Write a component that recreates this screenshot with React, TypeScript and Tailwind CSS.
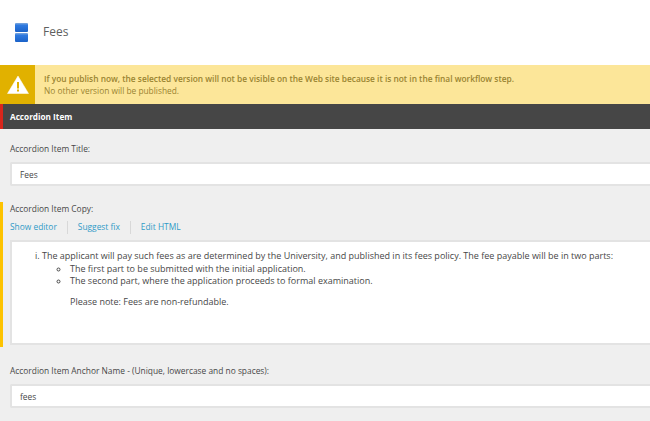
const font = "[font-family:'Open_Sans',sans-serif]";

function Field({ label, value }: { label: string; value: string }) {
  return (
    <div className="pl-[10px]">
      <label className="block h-[17px] text-[8.4px] leading-[17px] text-[#474747]">{label}</label>
      <div className="mt-[5px] h-[24px] rounded-l-[2px] border-2 border-r-0 border-[#e3e3e3] bg-white pl-[8px] text-[8.4px] leading-[21px] text-[#474747]">
        {value}
      </div>
    </div>
  );
}

export default function App() {
  return (
    <div className={`${font} h-[421px] w-[650px] overflow-hidden bg-[#efefef]`}>
      <header className="flex h-[65px] items-center bg-white pl-[15px]">
        <svg width="13" height="19" viewBox="0 0 13 19" aria-hidden="true">
          <defs>
            <linearGradient id="tile" x1="0" y1="0" x2="0" y2="1">
              <stop offset="0" stopColor="#7fa8dc" />
              <stop offset="0.25" stopColor="#2f7ae0" />
              <stop offset="1" stopColor="#1b62c8" />
            </linearGradient>
          </defs>
          <rect x="0" y="0" width="13" height="9" rx="1" fill="url(#tile)" />
          <rect x="0" y="10" width="13" height="9" rx="1" fill="url(#tile)" />
        </svg>
        <h1 className="mb-[2px] ml-[15px] text-[12px] font-normal text-[#5f5f5f]">Fees</h1>
      </header>

      <div className="flex h-[39px] bg-[#fce699]">
        <div className="flex w-[35px] items-center justify-center bg-[#e1b100]">
          <svg width="22" height="19" viewBox="0 0 22 19" aria-hidden="true">
            <path d="M11 1 L21.5 18.5 L0.5 18.5 Z" fill="#fff" stroke="#fff" strokeLinejoin="round" strokeWidth="0.5" />
            <rect x="10" y="7" width="2" height="6.5" fill="#e1b100" />
            <rect x="10" y="14.5" width="2" height="2" fill="#e1b100" />
          </svg>
        </div>
        <div className="pl-[9px] pt-[8px] text-[8.35px] leading-[12px] text-[#9a8431]">
          <p className="font-semibold">
            If you publish now, the selected version will not be visible on the Web site because it is not in the final workflow step.
          </p>
          <p>No other version will be published.</p>
        </div>
      </div>

      <div className="h-[25px] border-l-[3px] border-[#d9261c] bg-[#464646] pl-[7px] text-[8.2px] font-bold leading-[25px] text-white">
        Accordion Item
      </div>

      <div className="pt-[11px]">
        <Field label="Accordion Item Title:" value="Fees" />

        <div className="mt-[16px] h-[145px] border-l-[3px] border-[#fdc300] pl-[7px]">
          <label className="block h-[13px] text-[8.4px] leading-[13px] text-[#474747]">Accordion Item Copy:</label>
          <div className="mt-[5px] flex h-[15px] items-center text-[8.4px] text-[#2f9bc7]">
            <span className="border-r border-[#d8d8d8] pr-[10px]">Show editor</span>
            <span className="border-r border-[#d8d8d8] px-[10px]">Suggest fix</span>
            <span className="pl-[10px]">Edit HTML</span>
          </div>
          <div className="mt-[5px] h-[105px] border-2 border-r-0 border-[#e3e3e3] bg-white pl-[23px] pt-[8px] text-[9px] leading-[12.5px] text-[#474747]">
            <ol className="list-[lower-roman]">
              <li className="list-inside">
                The applicant will pay such fees as are determined by the University, and published in its fees policy. The fee payable will be in two parts:
              </li>
            </ol>
            <ul className="list-[circle] pl-[35px]">
              <li>The first part to be submitted with the initial application.</li>
              <li>The second part, where the application proceeds to formal examination.</li>
            </ul>
            <p className="mt-[8px] pl-[35px]">Please note: Fees are non-refundable.</p>
          </div>
        </div>

        <div className="mt-[15px]">
          <Field label="Accordion Item Anchor Name - (Unique, lowercase and no spaces):" value="fees" />
        </div>
      </div>
    </div>
  );
}
